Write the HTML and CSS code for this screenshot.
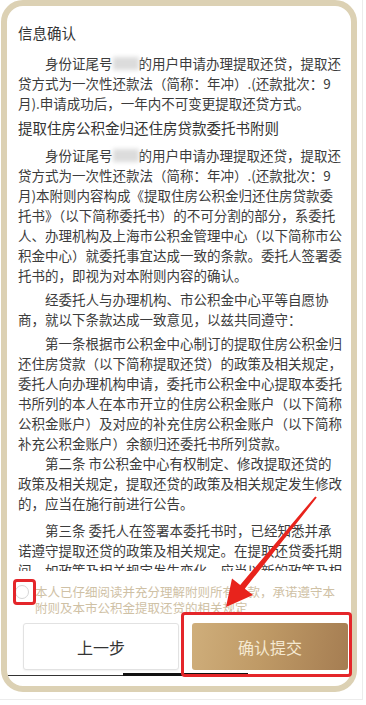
FILE: index.html
```html
<!DOCTYPE html>
<html lang="zh-CN">
<head>
  <meta charset="UTF-8" />
  <meta name="viewport" content="width=device-width, initial-scale=1.0"/>
  <title>信息确认</title>
  <link rel="stylesheet" href="styles.css">
</head>
<body>

  <div class="page">
    <div class="frame">
      <div class="doc">
        <h2 class="title">信息确认</h2>
        <p class="para">身份证尾号<span class="mask"></span>的用户申请办理提取还贷，提取还贷方式为一次性还款法（简称：年冲）.(还款批次：9月).申请成功后，一年内不可变更提取还贷方式。</p>
        <h3 class="heading">提取住房公积金归还住房贷款委托书附则</h3>
        <p class="para">身份证尾号<span class="mask"></span>的用户申请办理提取还贷，提取还贷方式为一次性还款法（简称：年冲）.(还款批次：9月)本附则内容构成《提取住房公积金归还住房贷款委托书》（以下简称委托书）的不可分割的部分，系委托人、办理机构及上海市公积金管理中心（以下简称市公积金中心）就委托事宜达成一致的条款。委托人签署委托书的，即视为对本附则内容的确认。</p>
        <p class="para">经委托人与办理机构、市公积金中心平等自愿协商，就以下条款达成一致意见，以兹共同遵守：</p>
        <p class="para">第一条根据市公积金中心制订的提取住房公积金归还住房贷款（以下简称提取还贷）的政策及相关规定，委托人向办理机构申请，委托市公积金中心提取本委托书所列的本人在本市开立的住房公积金账户（以下简称公积金账户）及对应的补充住房公积金账户（以下简称补充公积金账户）余额归还委托书所列贷款。</p>
        <p class="para tight">第二条 市公积金中心有权制定、修改提取还贷的政策及相关规定，提取还贷的政策及相关规定发生修改的，应当在施行前进行公告。</p>
        <p class="para loose">第三条 委托人在签署本委托书时，已经知悉并承诺遵守提取还贷的政策及相关规定。在提取还贷委托期间，如政策及相关规定发生变化，应当以新的政策及相关规定为准。</p>
      </div>

      <div class="footer">
        <label class="agree">
          <span class="check"></span>
          <span>本人已仔细阅读并充分理解附则所有条款，承诺遵守本附则及本市公积金提取还贷的相关规定</span>
        </label>
        <div class="actions">
          <button class="btn btn-prev">上一步</button>
          <button class="btn btn-submit">确认提交</button>
        </div>
        <div class="bar">
          <span class="bar-thin"></span>
          <span class="bar-thick"></span>
        </div>
      </div>
    </div>

    <!-- annotations -->
    <div class="mark mark-check"></div>
    <div class="mark mark-submit"></div>
    <svg class="arrow" viewBox="0 0 366 705">
      <polygon fill="#e8231c" points="315.2,496.4 240.2,585 232,578.5 226,607 253,595 244.8,588.8 316.8,497.6"/>
    </svg>
  </div>

</body>
</html>
```

FILE: styles.css
```css
* {
  box-sizing: border-box;
  margin: 0;
  padding: 0;
}

body {
  font-family: "Noto Sans CJK SC", "Noto Sans", sans-serif;
  background: #fff;
  color: #3c3c3c;
}

.page {
  position: relative;
  width: 363px;
  height: 700px;
  border-right: 1px solid #ececec;
  border-bottom: 1px solid #ececec;
}

.frame {
  margin-left: 1px;
  width: 356px;
  height: 692px;
  border: 6px solid #dcd1b4;
  border-radius: 22px;
  background: #fff;
  overflow: hidden;
}

.doc {
  height: 565px;
  overflow: hidden;
  padding: 17px 8px 0 11px;
}

.title,
.heading {
  font-size: 14.5px;
  font-weight: 400;
  line-height: 20px;
  color: #333;
}

.title {
  margin-bottom: 10px;
}

.heading {
  margin: 5px 0 7px;
}

.para {
  font-size: 13.5px;
  line-height: 20px;
  text-indent: 2em;
  margin-top: 4px;
}

.para.tight {
  margin-top: 0;
}

.para.loose {
  margin-top: 7px;
}

.mask {
  display: inline-block;
  width: 26px;
  height: 13px;
  vertical-align: -1px;
  background: #dcdcdc;
  filter: blur(2px);
}

.footer {
  padding: 13px 0 0 8px;
}

.agree {
  display: flex;
  gap: 6px;
  padding-right: 7px;
  font-size: 12.5px;
  line-height: 16px;
  color: #cfc1a5;
}

.check {
  flex: none;
  width: 14px;
  height: 14px;
  margin-top: 1px;
  border: 1px solid #d6d6d6;
  border-radius: 50%;
}

.actions {
  display: flex;
  gap: 13px;
  margin: 7px 0 0 8px;
}

.btn {
  width: 156px;
  height: 47px;
  font-family: inherit;
  font-size: 16px;
  border-radius: 3px;
}

.btn-prev {
  background: #fff;
  border: 1px solid #e2e2e2;
  color: #333;
  box-shadow: 0 1px 2px rgba(0, 0, 0, 0.06);
}

.btn-submit {
  border: none;
  background: linear-gradient(100deg, #cfae7b 0%, #bf9a66 45%, #a57d52 100%);
  color: #f5e9d1;
}

.bar {
  display: flex;
  align-items: flex-end;
  height: 4px;
  margin: 2px 0 0 -7px;
}

.bar-thin {
  width: 115px;
  height: 1px;
  background: #333;
}

.bar-thick {
  width: 125px;
  height: 3px;
  background: #111;
}

.mark {
  position: absolute;
  border: 3px solid #e4262a;
  border-radius: 4px;
}

.mark-check {
  left: 13px;
  top: 579px;
  width: 23px;
  height: 26px;
}

.mark-submit {
  left: 181px;
  top: 612px;
  width: 171px;
  height: 65px;
}

.arrow {
  position: absolute;
  left: 0;
  top: 0;
  width: 366px;
  height: 705px;
  pointer-events: none;
}
```
